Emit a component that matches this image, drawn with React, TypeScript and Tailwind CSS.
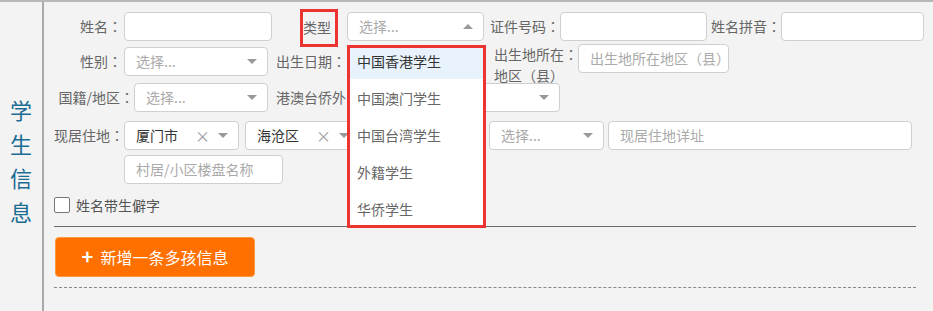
import React from "react";

function Arrow({ up = false }: { up?: boolean }) {
  return up ? (
    <span className="w-0 h-0 shrink-0 border-x-[5px] border-x-transparent border-b-[5px] border-b-[#999]" />
  ) : (
    <span className="w-0 h-0 shrink-0 border-x-[5px] border-x-transparent border-t-[5px] border-t-[#999]" />
  );
}

function Select({
  className = "",
  value,
  placeholder = "选择...",
  clear = false,
  up = false,
}: {
  className?: string;
  value?: string;
  placeholder?: string;
  clear?: boolean;
  up?: boolean;
}) {
  return (
    <div
      className={
        "h-[29px] bg-white border border-[#cfcfcf] rounded-[4px] flex items-center pl-[11px] pr-[10px] text-[14px] shrink-0 " +
        className
      }
    >
      <span className={value ? "flex-1 whitespace-nowrap overflow-hidden text-[#333]" : "flex-1 whitespace-nowrap overflow-hidden text-[#aaa]"}>
        {value ?? placeholder}
      </span>
      {clear && <span className="text-[#999] text-[15px] leading-none mr-[8px]">×</span>}
      <Arrow up={up} />
    </div>
  );
}

function Input({ className = "", placeholder = "" }: { className?: string; placeholder?: string }) {
  return (
    <div
      className={
        "h-[29px] bg-white border border-[#cfcfcf] rounded-[4px] flex items-center pl-[11px] text-[14px] text-[#aaa] whitespace-nowrap overflow-hidden shrink-0 " +
        className
      }
    >
      {placeholder}
    </div>
  );
}

function Colon() {
  return <span className="font-['Noto_Sans_CJK_TC',sans-serif]">：</span>;
}

function Label({ className = "", text, colon = true }: { className?: string; text: string; colon?: boolean }) {
  return (
    <div className={"h-[29px] flex items-center justify-end text-[14px] text-[#666] whitespace-nowrap shrink-0 " + className}>
      <span>{text}</span>
      {colon && <Colon />}
    </div>
  );
}

export default function App() {
  const items = ["中国香港学生", "中国澳门学生", "中国台湾学生", "外籍学生", "华侨学生"];
  return (
    <div className="relative w-[933px] h-[311px] bg-[#f3f3f3] border-t-2 border-[#b8b8b8] flex overflow-hidden font-['Noto_Sans_CJK_SC','Noto_Sans',sans-serif]">
      <div className="w-[42px] shrink-0 flex flex-col items-center justify-center pt-[6px] text-[22px] leading-[34px] text-[#1b6c93]">
        <span>学</span>
        <span>生</span>
        <span>信</span>
        <span>息</span>
      </div>
      <div className="w-[2px] shrink-0 bg-[#aaa]" />
      <div className="flex-1 flex flex-col pt-[10px]">
        {/* Row 1 */}
        <div className="flex items-center h-[29px]">
          <Label className="w-[80px] pr-[2px]" text="姓名" />
          <Input className="w-[148px]" />
          <div className="w-[75px] h-[29px] shrink-0 flex items-center justify-end pr-[9px]">
            <span className="w-[38px] h-[38px] shrink-0 mt-[2px] border-[3px] border-[#ee3333] flex items-center text-[14px] text-[#666]">
              类型
            </span>
          </div>
          <Select className="w-[137px]" up />
          <Label className="w-[76px]" text="证件号码" />
          <Input className="w-[147px]" />
          <Label className="w-[74px]" text="姓名拼音" />
          <Input className="w-[143px]" />
        </div>
        {/* Row 2 */}
        <div className="flex items-start mt-[3px]">
          <Label className="w-[80px] pr-[2px] mt-[3px]" text="性别" />
          <Select className="w-[144px] mt-[3px]" />
          <Label className="w-[80px] pl-[8px] mt-[3px] justify-start" text="出生日期" />
          <Input className="w-[136px] mt-[3px]" />
          <div className="ml-[10px] w-[84px] shrink-0 flex flex-col text-[14px] text-[#666] whitespace-nowrap">
            <div className="h-[21px] leading-[21px] flex items-center">
              <span>出生地所在</span>
              <Colon />
            </div>
            <div className="h-[21px] leading-[21px] flex items-center">地区（县）</div>
          </div>
          <Input className="w-[151px]" placeholder="出生地所在地区（县）" />
        </div>
        {/* Row 3 */}
        <div className="flex items-center -mt-[3px]">
          <Label className="w-[90px]" text="国籍/地区" />
          <Select className="w-[134px]" />
          <Label className="w-[71px] ml-[8px] justify-start overflow-hidden" text="港澳台侨外" colon={false} />
          <div className="w-[27px] shrink-0" />
          <Select className="w-[186px]" placeholder="" />
        </div>
        {/* Row 4 */}
        <div className="flex items-center mt-[9px]">
          <Label className="w-[80px]" text="现居住地" />
          <Select className="w-[115px]" value="厦门市" clear />
          <Select className="w-[115px] ml-[6px]" value="海沧区" clear />
          <Select className="w-[115px] ml-[6px]" placeholder="" />
          <Select className="w-[115px] ml-[8px]" />
          <Input className="w-[304px] ml-[4px]" placeholder="现居住地详址" />
        </div>
        {/* Row 5 */}
        <div className="flex items-center mt-[5px]">
          <Input className="w-[159px] ml-[80px]" placeholder="村居/小区楼盘名称" />
        </div>
        {/* Checkbox */}
        <div className="flex items-center mt-[13px] ml-[10px] h-[16px]">
          <span className="w-[16px] h-[16px] border border-[#777] rounded-[2px] bg-white shrink-0" />
          <span className="ml-[6px] text-[14px] text-[#555]">姓名带生僻字</span>
        </div>
        <div className="mt-[13px] ml-[10px] w-[862px] h-px bg-[#6a6a6a]" />
        <div className="mt-[10px] ml-[11px] w-[200px] h-[40px] rounded-[4px] bg-[#ff7000] border border-[#ff9a3c] flex items-center justify-center text-white text-[16px]">
          <span className="font-bold text-[20px] leading-none mr-[7px] -mt-[2px]">+</span>
          <span>新增一条多孩信息</span>
        </div>
        <div className="mt-[10px] ml-[10px] w-[862px] border-t border-dashed border-[#888]" />
      </div>

      {/* Dropdown */}
      <div className="absolute left-[347px] top-[43px] w-[139px] h-[183px] border-[3px] border-[#ee3333] bg-white overflow-hidden">
        {items.map((t, i) => (
          <div
            key={t}
            className={
              i === 0
                ? "h-[31px] mb-[6px] pl-[7px] pt-[4px] leading-[18px] text-[14px] text-[#333] bg-[#e8f2fc]"
                : "h-[31px] mb-[6px] pl-[7px] pt-[4px] leading-[18px] text-[14px] text-[#666]"
            }
          >
            {t}
          </div>
        ))}
      </div>
    </div>
  );
}
